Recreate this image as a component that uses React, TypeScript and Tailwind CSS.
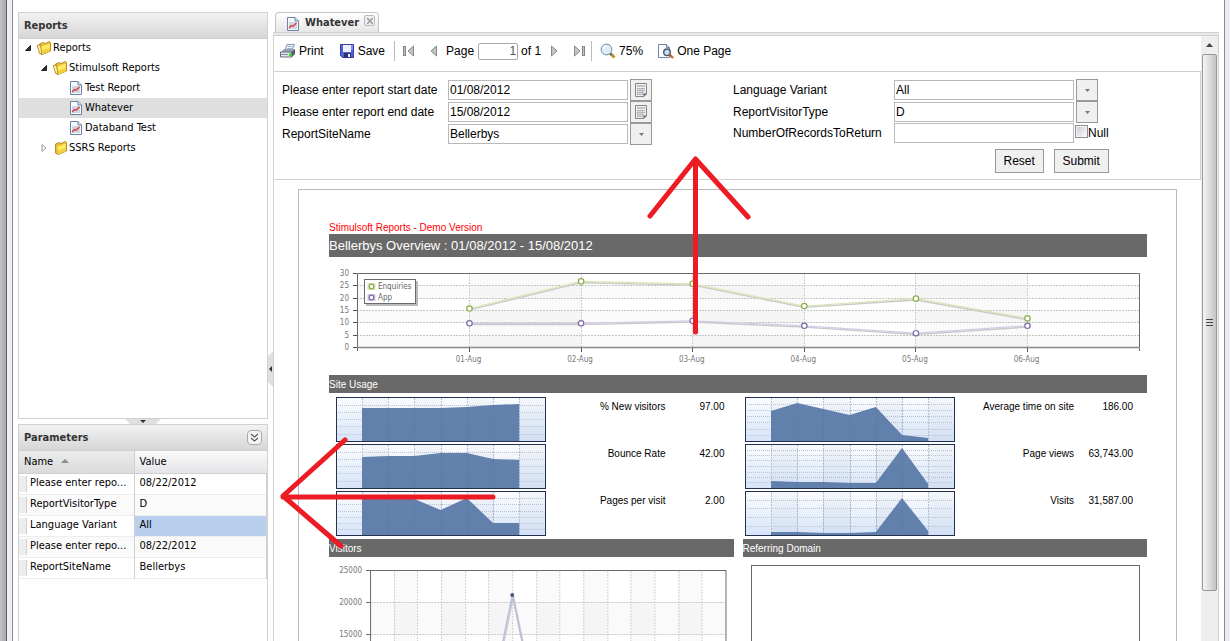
import { clsx } from 'clsx'
import type { ReactNode } from 'react'

const tree = [
  { name: 'Reports', depth: 0, kind: 'open' },
  { name: 'Stimulsoft Reports', depth: 1, kind: 'open' },
  { name: 'Test Report', depth: 2, kind: 'report' },
  { name: 'Whatever', depth: 2, kind: 'report', selected: true },
  { name: 'Databand Test', depth: 2, kind: 'report' },
  { name: 'SSRS Reports', depth: 1, kind: 'closed' },
]

const indents = ['pl-1', 'pl-5', 'pl-9']

const parameters = [
  { name: 'Please enter repo...', value: '08/22/2012' },
  { name: 'ReportVisitorType', value: 'D' },
  { name: 'Language Variant', value: 'All', selected: true },
  { name: 'Please enter repo...', value: '08/22/2012' },
  { name: 'ReportSiteName', value: 'Bellerbys' },
]

const days = ['01-Aug', '02-Aug', '03-Aug', '04-Aug', '05-Aug', '06-Aug']
const enquiries = [16, 27, 26, 17, 20, 12]
const app = [10, 10, 11, 9, 6, 9]

// area: heights in pixels from the top of the chart; lines: positions of the horizontal grid
const usageLeft = [
  { label: '% New visitors', value: '97.00', area: [11, 11, 11, 11, 10, 8, 7], lines: [8, 15, 22, 29, 37] },
  { label: 'Bounce Rate', value: '42.00', area: [13, 12, 12, 9, 9, 15, 16], lines: [8, 15, 22, 29, 37] },
  { label: 'Pages per visit', value: '2.00', area: [8, 8, 8, 19, 7, 32, 32], lines: [7, 13, 20, 26, 32, 38] },
]

const usageRight = [
  { label: 'Average time on site', value: '186.00', area: [14, 6, 12, 18, 10, 38, 41], lines: [7, 13, 19, 25, 32, 38] },
  { label: 'Page views', value: '63,743.00', area: [37, 38, 38, 39, 39, 4, 40], lines: [6, 11, 16, 22, 28, 33, 38] },
  { label: 'Visits', value: '31,587.00', area: [41, 41, 42, 42, 41, 7, 40], lines: [9, 17, 26, 35] },
]

function FolderIcon({ open }: { open?: boolean }) {
  return (
    <svg width="16" height="16" viewBox="0 0 16 16" className="shrink-0">
      <path d="M3.5 4 L7.5 2.5 L9 3.5 L13.5 1.5 L14.5 2.5 V11 L6 14.5 L3.5 13 Z" fill="#e9bd35" stroke="#a67c12" strokeWidth="0.8" />
      {open && <path d="M1.2 5.5 L4.5 5 L6 14.3 L3.5 13.2 Z" fill="#fdf0a0" stroke="#a67c12" strokeWidth="0.8" />}
      <path d="M5.5 6.5 L13.8 3.5 V11 L6.2 14 Z" fill="#fdea62" />
      <path d="M6 10.5 L13.8 8 V11 L6.2 14 Z" fill="#f6cf3c" />
    </svg>
  )
}

function ReportIcon() {
  return (
    <svg width="16" height="16" viewBox="0 0 16 16" className="shrink-0">
      <path d="M2.5 1.5 H10 L13.5 5 V14.5 H2.5 Z" fill="#f6fafe" stroke="#6d82a6" />
      <path d="M10 1.5 V5 H13.5" fill="#d5e1f0" stroke="#6d82a6" />
      <rect x="4" y="6" width="8" height="7" fill="#cdd6e2" />
      <path d="M4 12 L6.5 9.5 L8 10.3 L11.5 7" fill="none" stroke="#d8392e" strokeWidth="1.3" />
    </svg>
  )
}

function PrintIcon() {
  return (
    <svg width="16" height="16" viewBox="0 0 16 16">
      <path d="M5 7 L7 1.5 H14.5 L12 7 Z" fill="#eef5fd" stroke="#7f97b5" />
      <path d="M7.5 3.5 H12.5 M7 5.5 H11.5" stroke="#8fb0d8" />
      <path d="M1 9 L4 6 H15 L12 9 Z" fill="#98a0ae" />
      <path d="M0.5 9 H11.5 V14 H0.5 Z" fill="#dfe4ea" stroke="#687180" />
      <path d="M11.5 9 L15 6 V11 L11.5 14.5 Z" fill="#565d6a" />
      <path d="M1 11.5 H8" stroke="#8a93a1" />
      <rect x="9" y="10.5" width="3" height="2.5" fill="#35d428" />
    </svg>
  )
}

function SaveIcon() {
  return (
    <svg width="16" height="16" viewBox="0 0 16 16">
      <path d="M1.5 1.5 H14.5 V14.5 H3.5 L1.5 12.5 Z" fill="#5561d2" stroke="#343da6" />
      <rect x="4" y="2" width="8" height="7" fill="#edf1ff" />
      <rect x="12" y="2" width="2" height="5" fill="#7f8be6" />
      <rect x="5" y="10" width="7" height="4.5" fill="#2a3070" />
      <rect x="9" y="11" width="2" height="3" fill="#f0f0f8" />
    </svg>
  )
}

function MagnifierIcon() {
  return (
    <svg width="16" height="16" viewBox="0 0 16 16">
      <path d="M10.5 10.5 L14.5 14.5" stroke="#c4912a" strokeWidth="3" />
      <path d="M9.5 10 L11.5 12" stroke="#5d6675" strokeWidth="2" />
      <circle cx="6.5" cy="6.5" r="5.4" fill="#dceaf9" stroke="#7386a3" />
      <path d="M3.5 6 A3.3 3.3 0 0 1 7 3" fill="none" stroke="#fff" strokeWidth="1.6" />
    </svg>
  )
}

function PageZoomIcon() {
  return (
    <svg width="16" height="16" viewBox="0 0 16 16">
      <path d="M0.5 1.5 H8.5 L11.5 4.5 V14.5 H0.5 Z" fill="#fafdff" stroke="#6f87ad" />
      <path d="M8.5 1.5 V4.5 H11.5" fill="#cbd8ea" stroke="#6f87ad" />
      <path d="M11.5 11.5 L15 15" stroke="#c06a20" strokeWidth="2.4" />
      <circle cx="9" cy="9.3" r="3.3" fill="#c6dcf1" stroke="#4c596e" strokeWidth="1.4" />
    </svg>
  )
}

function PagerIcon({ back, edge }: { back?: boolean; edge?: boolean }) {
  return (
    <svg width="12" height="12" viewBox="0 0 12 12" className={clsx(!back && 'rotate-180')}>
      {edge && <rect x="0.5" y="1.5" width="2" height="9" fill="#c4c4c4" stroke="#858585" />}
      <path d="M10.5 1 V11 L5 6 Z" fill="#c4c4c4" stroke="#8a8a8a" />
    </svg>
  )
}

function CalendarIcon() {
  return (
    <svg width="14" height="16" viewBox="0 0 14 16">
      <path d="M1.5 1.5 H12.5 V12 L10 14.5 H1.5 Z" fill="#efeff1" stroke="#8a8583" />
      <path d="M12.5 11.5 H9.5 V14.5 Z" fill="#555" />
      <rect x="3" y="3" width="8" height="2" fill="#c3c3ca" />
      <path d="M3 6.5 H11 M3 8.5 H11 M3 10.5 H10 M3.5 6 V12 M6 6 V12 M8.5 6 V12 M3 12.5 H9" stroke="#b4b4be" />
    </svg>
  )
}

function SidePanelTitle({ children }: { children: ReactNode }) {
  return (
    <div className="flex h-[26px] shrink-0 items-center justify-between border-b border-[#d0d0d0] bg-linear-to-b from-[#f2f2f2] to-[#d6d6d6] px-[5px] text-[11px] font-bold text-[#333]">
      {children}
    </div>
  )
}

function ReportTree() {
  return (
    <section className="flex h-[407px] shrink-0 flex-col border border-[#d0d0d0] bg-white">
      <SidePanelTitle>
        <h2 className="pt-px">Reports</h2>
      </SidePanelTitle>
      <ul className="-mt-px">
        {tree.map((node) => (
          <li key={node.name} className={clsx('flex h-5 items-center', indents[node.depth], node.selected && 'bg-[#dfdfdf]')}>
            <svg width="12" height="12" viewBox="0 0 12 12" className="mr-px shrink-0">
              {node.kind === 'open' && <path d="M7.5 3.5 V8.5 H2.5 Z" fill="#333" stroke="#222" />}
              {node.kind === 'closed' && <path d="M3 2.5 L7 6 L3 9.5 Z" fill="#fff" stroke="#999" />}
            </svg>
            {node.kind === 'report' ? <ReportIcon /> : <FolderIcon open={node.kind === 'open'} />}
            <a href="#" className="ml-px text-black">{node.name}</a>
          </li>
        ))}
      </ul>
    </section>
  )
}

function ParameterGrid() {
  return (
    <section className="flex min-h-0 flex-1 flex-col border border-b-0 border-[#d0d0d0] bg-white">
      <SidePanelTitle>
        <h2 className="pt-px">Parameters</h2>
        <button aria-label="Collapse" className="flex size-[15px] items-center justify-center rounded-sm border border-[#aaa] bg-[#f4f4f4]">
          <svg width="9" height="9" viewBox="0 0 9 9" fill="none" stroke="#555" strokeWidth="1.1">
            <path d="M1 1 L4.5 4 L8 1 M1 5 L4.5 8 L8 5" />
          </svg>
        </button>
      </SidePanelTitle>
      <table className="w-full table-fixed border-collapse text-left">
        <thead>
          <tr className="h-[22px]">
            <th className="w-[115px] border-r border-b border-[#d0d0d0] bg-linear-to-b from-[#ececec] to-[#dadada] pl-[5px] font-normal">
              Name
              <svg width="8" height="5" viewBox="0 0 8 5" className="ml-2 inline-block align-middle">
                <path d="M0 4 L4 0 L8 4 Z" fill="#8c8c8c" />
              </svg>
            </th>
            <th className="border-b border-[#d0d0d0] bg-linear-to-b from-[#f9f9f9] to-[#e4e5e8] pl-[5px] font-normal">Value</th>
          </tr>
        </thead>
        <tbody>
          {parameters.map((row, i) => (
            <tr key={i} className={clsx('h-[21px] border-b border-[#ededed]', i % 2 === 1 && 'bg-[#fafafa]')}>
              <td className="border-r border-[#d0d0d0] p-0">
                <div className="flex h-5 items-center whitespace-nowrap">
                  <span className="h-4 w-2 shrink-0 border-r border-[#d0d0d0] bg-[#ededed]" />
                  <span className="pl-[3px]">{row.name}</span>
                </div>
              </td>
              <td className={clsx('border-r border-[#d0d0d0] py-0 pl-[5px]', row.selected && 'bg-[#b8cfee]')}>{row.value}</td>
            </tr>
          ))}
        </tbody>
      </table>
    </section>
  )
}

function Toolbar() {
  return (
    <div className="flex h-[35px] items-center pb-[5px] pl-[6px]">
      <button className="flex items-center gap-[3px]"><PrintIcon />Print</button>
      <button className="ml-[15px] flex items-center gap-[3px]"><SaveIcon />Save</button>
      <span className="ml-[9px] h-5 w-px bg-[#bbb]" />
      <button aria-label="First page" className="ml-[8px]"><PagerIcon back edge /></button>
      <button aria-label="Previous page" className="ml-[11px]"><PagerIcon back /></button>
      <label htmlFor="page" className="ml-[8px]">Page</label>
      <input id="page" defaultValue="1" className="ml-[4px] h-[17px] w-10 rounded-xs border border-[#aaa] pr-px text-right text-[#555]" />
      <span className="ml-[3px]">of 1</span>
      <button aria-label="Next page" className="ml-[9px]"><PagerIcon /></button>
      <button aria-label="Last page" className="ml-[11px]"><PagerIcon edge /></button>
      <span className="ml-[6px] h-5 w-px bg-[#bbb]" />
      <button className="ml-[8px] flex items-center gap-[3px]"><MagnifierIcon />75%</button>
      <button className="ml-[15px] flex items-center gap-[3px]"><PageZoomIcon />One Page</button>
    </div>
  )
}

function Field({ id, label, labelClass, value, kind }: { id: string; label: string; labelClass: string; value: string; kind: 'date' | 'list' }) {
  const box = 'h-5 w-[180px] border border-[#b9b9b9] bg-white px-px'
  return (
    <div className="flex h-[22px] items-center">
      <label htmlFor={id} className={labelClass}>{label}</label>
      {kind === 'date' ? (
        <input id={id} defaultValue={value} className={box} />
      ) : (
        <select id={id} className={clsx(box, 'appearance-none')}>
          <option>{value}</option>
        </select>
      )}
      <button type="button" aria-label={`Choose ${label}`} className="ml-[2px] flex size-[22px] items-center justify-center border border-[#999] bg-[#f0f0f0]">
        {kind === 'date' ? (
          <CalendarIcon />
        ) : (
          <svg width="5" height="3" viewBox="0 0 5 3"><path d="M0 0 H5 L2.5 3 Z" fill="#777" /></svg>
        )}
      </button>
    </div>
  )
}

function ParameterForm() {
  return (
    <form className="flex h-[109px] border border-l-0 border-[#d0d0d0] pl-2 pt-[7px]">
      <div className="w-[451px] shrink-0">
        <Field id="start" label="Please enter report start date" labelClass="w-[166px]" value="01/08/2012" kind="date" />
        <Field id="end" label="Please enter report end date" labelClass="w-[166px]" value="15/08/2012" kind="date" />
        <Field id="site" label="ReportSiteName" labelClass="w-[166px]" value="Bellerbys" kind="list" />
      </div>
      <div>
        <Field id="language" label="Language Variant" labelClass="w-[161px]" value="All" kind="list" />
        <Field id="visitor" label="ReportVisitorType" labelClass="w-[161px]" value="D" kind="list" />
        <div className="flex h-5 items-center">
          <label htmlFor="records" className="w-[161px]">NumberOfRecordsToReturn</label>
          <input id="records" className="h-5 w-[180px] border border-[#b9b9b9] px-px" />
          <label className="ml-px flex items-center">
            <input type="checkbox" className="mb-1 size-[13px] appearance-none border border-[#8e8f8f] bg-linear-to-br from-[#c5cbd1] to-white outline outline-[#f4f4f4] -outline-offset-2" />
            Null
          </label>
        </div>
        <div className="mt-[6px] flex justify-end gap-[10px]">
          <button type="reset" className="h-6 w-[49px] border border-[#999] bg-[#f0f0f0]">Reset</button>
          <button type="button" className="h-6 w-[55px] border border-[#999] bg-[#f0f0f0]">Submit</button>
        </div>
      </div>
    </form>
  )
}

function OverviewChart() {
  const x = (i: number) => 140.5 + i * 111.6
  const y = (v: number) => 90.5 - v * 2.467
  const series = [
    { name: 'Enquiries', data: enquiries, line: '#dbe6b8', dot: '#8aab4b' },
    { name: 'App', data: app, line: '#d3cbe6', dot: '#7d6ba5' },
  ]
  return (
    <svg viewBox="0 0 818 118" className="block w-full font-['DejaVu_Sans_Condensed','DejaVu_Sans',sans-serif] text-[8px]">
      <rect x="28" y="28.8" width="782" height="12.3" fill="#fafafa" />
      <rect x="28" y="53.5" width="782" height="12.3" fill="#fafafa" />
      <rect x="28" y="78.2" width="782" height="12.3" fill="#fafafa" />
      {[0, 2, 4].map((i) => <rect key={i} x={x(i)} y="16" width="111.6" height="74" fill="#000" fillOpacity="0.02" />)}
      {[5, 10, 15, 20, 25].map((v) => (
        <path key={v} d={`M28 ${Math.floor(y(v)) + 0.5} H810`} stroke="#c4c4c4" strokeDasharray="2 1" />
      ))}
      {days.map((day, i) => (
        <g key={day}>
          <path d={`M${Math.floor(x(i)) + 0.5} 16 V90`} stroke="#cdcdcd" strokeDasharray="2 1" />
          <path d={`M${Math.floor(x(i)) + 0.5} 90 V95`} stroke="#555" />
          <text x={x(i) - 1} y="105" textAnchor="middle" fill="#777">{day}</text>
        </g>
      ))}
      {[0, 5, 10, 15, 20, 25, 30].map((v) => (
        <g key={v}>
          <path d={`M24 ${Math.floor(y(v)) + 0.5} H28`} stroke="#555" />
          <text x="20" y={y(v) + 2.5} textAnchor="end" fill="#777">{v}</text>
        </g>
      ))}
      <path d="M28.5 94 V16.5 H810.5 V94" fill="none" stroke="#6a6a6a" />
      <path d="M28 90.5 H811" stroke="#888" strokeWidth="1.5" />
      {series.map((s) => (
        <g key={s.name}>
          <polyline points={s.data.map((v, i) => `${x(i)},${y(v) + 1.8}`).join(' ')} fill="none" stroke="#c9c9c9" strokeWidth="1.4" />
          <polyline points={s.data.map((v, i) => `${x(i)},${y(v) + 0.5}`).join(' ')} fill="none" stroke={s.line} strokeWidth="1.2" />
          {s.data.map((v, i) => <circle key={i} cx={x(i)} cy={y(v) + 0.5} r="2.7" fill="#fff" stroke={s.dot} strokeWidth="1.2" />)}
        </g>
      ))}
      <rect x="37" y="24" width="52" height="25" fill="#bbb" />
      <rect x="35.5" y="22.5" width="51" height="24" fill="#fff" stroke="#6a6a6a" />
      {series.map((s, i) => (
        <g key={s.name}>
          <rect x="38.5" y={26 + i * 11} width="8" height="7" fill={s.line} />
          <circle cx="42.5" cy={29.5 + i * 11} r="2.3" fill="#fff" stroke={s.dot} strokeWidth="1.2" />
          <text x="49" y={32 + i * 11} fill="#666">{s.name}</text>
        </g>
      ))}
    </svg>
  )
}

function UsageRow({ id, label, value, area, lines }: { id: string; label: string; value: string; area: number[]; lines: number[] }) {
  const points = area.map((v, i) => `${26 + i * 26.2},${v}`).join(' ')
  return (
    <div className="flex h-[47px] text-[10px]">
      <svg viewBox="0 0 210 45" className="h-[45px] w-[210px] shrink-0">
        <defs>
          <linearGradient id={id} x1="0" y1="0" x2="0" y2="1">
            <stop offset="0" stopColor="#fbfcfe" />
            <stop offset="1" stopColor="#d6e4f9" />
          </linearGradient>
        </defs>
        <rect x="0.5" y="0.5" width="209" height="44" fill={`url(#${id})`} />
        {[0, 2, 4, 6].map((i) => <rect key={i} x={26 + i * 26.2} y="1" width="26.2" height="43" fill="#8896b0" fillOpacity="0.06" />)}
        {lines.map((v) => <path key={v} d={`M2 ${v + 0.5} H208`} stroke="#bcc3d0" strokeDasharray="1 1" />)}
        {area.map((_, i) => <path key={i} d={`M${Math.round(26 + i * 26.2) + 0.5} 1 V44`} stroke="#b9c0cf" strokeDasharray="2 1" />)}
        <polygon points={`26,44 ${points} 183.2,44`} fill="#5b7aa8" fillOpacity="0.95" />
        {[1, 2, 3, 4, 5].map((i) => <path key={i} d={`M${Math.round(26 + i * 26.2) + 0.5} 12 V44`} stroke="#48628f" strokeOpacity="0.15" strokeDasharray="2 1" />)}
        <rect x="0.5" y="0.5" width="209" height="44" fill="none" stroke="#24304f" />
      </svg>
      <span className="flex-1 pt-[2px] text-right">{label}</span>
      <span className="w-[59px] pt-[2px] text-right">{value}</span>
    </div>
  )
}

function VisitorsChart() {
  return (
    <svg viewBox="0 0 404 200" className="block w-full font-['DejaVu_Sans_Condensed','DejaVu_Sans',sans-serif] text-[8px]">
      <rect x="41" y="45" width="355" height="32" fill="#fafafa" />
      <rect x="41" y="109" width="355" height="32" fill="#fafafa" />
      {[1, 3, 5, 7, 9, 11, 13].map((i) => (
        <rect key={i} x={41 + i * 23.66} y="13" width="23.66" height="160" fill="#000" fillOpacity="0.02" />
      ))}
      {Array.from({ length: 14 }, (_, i) => (
        <path key={i} d={`M${Math.round(41 + (i + 1) * 23.66) + 0.5} 14 V173`} stroke="#d0d0d0" strokeDasharray="2 1" />
      ))}
      {/* the label row at 15000 and below runs off the window */}
      {[25000, 20000, 15000, 10000, 5000].map((v, i) => (
        <g key={v}>
          <path d={`M37 ${13.5 + i * 32} H41`} stroke="#666" />
          {i > 0 && <path d={`M42 ${13.5 + i * 32} H396`} stroke="#cacaca" strokeDasharray="2 1" />}
          <text x="33" y={16 + i * 32} textAnchor="end" fill="#777">{v}</text>
        </g>
      ))}
      <path d="M41.5 173 V13.5 H396.5 V173" fill="none" stroke="#6a6a6a" />
      <polyline points="160.5,152 184,39 207.5,152" fill="none" stroke="#c6c6c6" strokeWidth="1.8" />
      <polyline points="159.5,152 183,38 206.5,152" fill="none" stroke="#b4c3dc" strokeWidth="1.2" />
      <circle cx="183" cy="38" r="2" fill="#4c5b72" />
    </svg>
  )
}

function SectionTitle({ children }: { children: ReactNode }) {
  return <h3 className="flex h-[18px] items-center bg-[#696969] text-[10px] text-white">{children}</h3>
}

function ReportPage() {
  return (
    <article className="mx-6 mt-[9px] border border-b-0 border-[#b9b9b9] bg-white pl-[30px] pr-[29px] pt-[31px]">
      <p className="h-[13px] text-[10px] leading-[14px] text-[#ff0000]">Stimulsoft Reports - Demo Version</p>
      <h1 className="flex h-[23px] items-center bg-[#696969] pt-px text-[13px] text-white">Bellerbys Overview : 01/08/2012 - 15/08/2012</h1>
      <OverviewChart />
      <SectionTitle>Site Usage</SectionTitle>
      <div className="flex gap-5 pb-px pl-[7px] pr-[14px] pt-1">
        <div className="flex-1">
          {usageLeft.map((row, i) => <UsageRow key={row.label} id={`left${i}`} {...row} />)}
        </div>
        <div className="flex-1">
          {usageRight.map((row, i) => <UsageRow key={row.label} id={`right${i}`} {...row} />)}
        </div>
      </div>
      <div className="flex gap-[9px]">
        <div className="flex-1">
          <SectionTitle>Visitors</SectionTitle>
          <VisitorsChart />
        </div>
        <div className="flex-1">
          <SectionTitle>Referring Domain</SectionTitle>
          <div className="ml-2 mr-[7px] mt-2 h-48 border border-[#6a6a6a]" />
        </div>
      </div>
    </article>
  )
}

function ScrollBar() {
  return (
    <div className="flex w-[17px] shrink-0 flex-col items-center bg-[#eee]">
      <svg width="17" height="18" viewBox="0 0 17 18" className="shrink-0">
        <path d="M5 11 L8.5 7 L12 11 Z" fill="#444" />
      </svg>
      <div className="mb-[50px] flex w-[15px] flex-1 items-center justify-center rounded-xs border border-[#979797] bg-linear-to-r from-[#f5f5f5] to-[#c4c4c8]">
        <svg width="8" height="9" viewBox="0 0 8 9">
          <path d="M0 1.5 H7 M0 4.5 H7 M0 7.5 H7" stroke="#444" />
        </svg>
      </div>
    </div>
  )
}

function Arrows() {
  return (
    <svg width="1230" height="641" viewBox="0 0 1230 641" className="pointer-events-none absolute top-0 left-0" fill="none" stroke="#ed1c24" strokeWidth="5" strokeLinecap="round" strokeLinejoin="round">
      <path d="M695.5 332 V160 M650 216 L695.5 159 L748 217" />
      <path d="M493 497 H283 M345 440 L283 496 L341 546" />
    </svg>
  )
}

export default function App() {
  return (
    <div className="relative flex h-screen overflow-hidden bg-white font-['DejaVu_Sans_Condensed','DejaVu_Sans',sans-serif] text-[11px] text-black">
      {/* Window frame */}
      <div className="flex w-[13px] shrink-0 border-r border-[#8b8b93] bg-[#efeff4]">
        <div className="w-[7px] border-r border-[#5f6066] bg-linear-to-r from-[#c3c4c8] to-[#a9aaae]" />
      </div>

      <aside className="ml-[5px] flex w-[250px] shrink-0 flex-col pt-3">
        <ReportTree />
        <button aria-label="Collapse parameters" className="flex h-[5px] shrink-0 justify-center">
          <svg width="36" height="5" viewBox="0 0 36 5">
            <path d="M0 0 H36 L31 5 H5 Z" fill="#e0e0e0" />
            <path d="M15 1 H21 L18 4 Z" fill="#333" />
          </svg>
        </button>
        <ParameterGrid />
      </aside>

      <button aria-label="Collapse reports" className="flex w-[5px] shrink-0 items-center pt-24">
        <svg width="5" height="36" viewBox="0 0 5 36">
          <path d="M5 0 V36 L0 31 V5 Z" fill="#e0e0e0" />
          <path d="M4 15 V21 L1 18 Z" fill="#333" />
        </svg>
      </button>

      <main className="mr-[5px] flex min-w-0 flex-1 flex-col pt-3">
        <div className="flex pl-[2px]">
          <div className="flex h-5 w-[104px] items-center rounded-t border border-b-0 border-[#c4c4c4] bg-linear-to-b from-white to-[#e6e6e6] pl-[9px] pt-[2px] text-[11px] font-bold text-[#333]">
            <ReportIcon />
            <span className="ml-[4px]">Whatever</span>
            <button aria-label="Close tab" className="mb-[6px] ml-[5px] flex size-[11px] shrink-0 items-center justify-center rounded-xs border border-[#bbb] bg-[#eee]">
              <svg width="6" height="6" viewBox="0 0 6 6"><path d="M0 0 L6 6 M6 0 L0 6" stroke="#999" strokeWidth="1.5" /></svg>
            </button>
          </div>
        </div>
        <div className="h-1 shrink-0 border-y border-[#d0d0d0] bg-[#eaeaea]" />
        <div className="flex min-h-0 flex-1 border-x border-[#d0d0d0] font-['Liberation_Sans',Arial,sans-serif] text-[12px]">
          <div className="min-w-0 flex-1 overflow-hidden">
            <Toolbar />
            <ParameterForm />
            <ReportPage />
          </div>
          <ScrollBar />
        </div>
      </main>

      <div className="w-[6px] shrink-0 border-l border-[#8b8b93] bg-[#ececf2]" />
      <Arrows />
    </div>
  )
}
